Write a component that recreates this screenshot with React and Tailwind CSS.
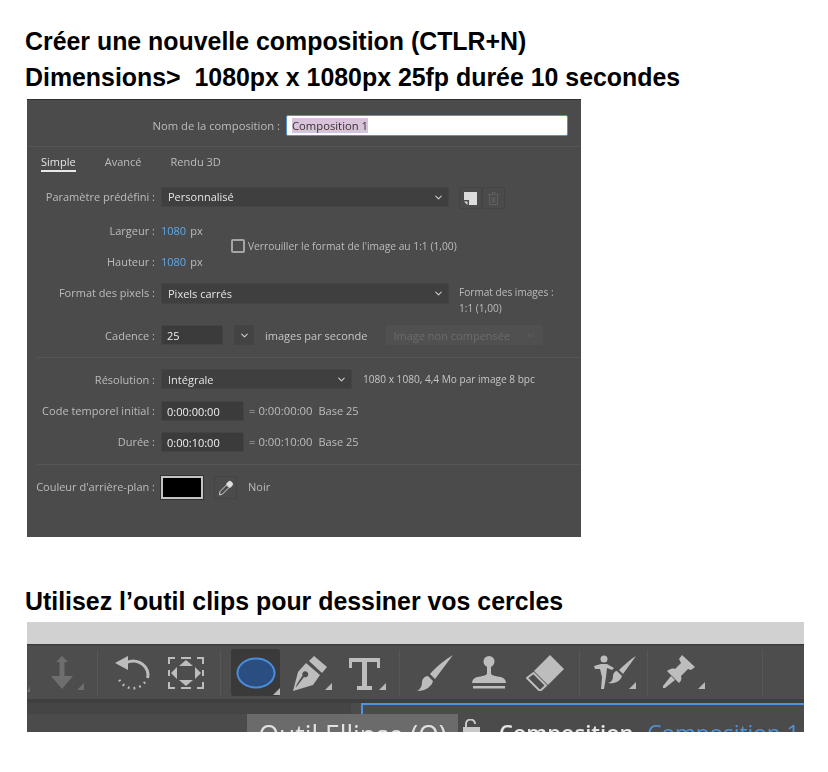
import { ChevronDown } from 'lucide-react';

const panelFont = { fontFamily: '"Open Sans", sans-serif' };

function Label({ children, width = 'w-[128px]', className = '' }) {
  return <div className={`${width} ${className} shrink-0 text-right text-[#bcbcbc] whitespace-nowrap`}>{children}</div>;
}

function Select({ children, width, height = 'h-[20px]', textClass = '-mt-[1px]' }) {
  return (
    <div className={`${width} ${height} ml-[6px] flex items-center justify-between rounded-[2px] border border-[#444444] bg-[#3f3f3f] pl-[6px] pr-[4px] font-medium text-[#e4e4e4]`}>
      <span className={textClass}>{children}</span>
      <ChevronDown size={11} strokeWidth={2.25} className="text-[#d0d0d0]" />
    </div>
  );
}

function Field({ children, width }) {
  return (
    <div className={`${width} ml-[6px] flex h-[20px] items-center rounded-[2px] border border-[#444444] bg-[#3b3b3b] pl-[5px] text-[#f0f0f0]`}>
      {children}
    </div>
  );
}

function Corner() {
  return (
    <svg width="7" height="7" viewBox="0 0 7 7" className="absolute bottom-[1px] right-0">
      <path d="M7 0V7H0Z" fill="#b9b9b9" />
    </svg>
  );
}

function Sep({ left }) {
  return <div className={`${left} h-[46px] w-[1px] shrink-0 bg-[#575757]`} />;
}

function CompositionPanel() {
  return (
    <div style={panelFont} className="ml-[2px] flex h-[438px] w-[554px] flex-col border-t border-[#2f2f2f] bg-[#4b4b4b] text-[11px] leading-[15px] blur-[0.35px]">
      <div className="flex h-[47px] shrink-0 items-start border-b border-[#555555] pt-[15px]">
        <div className="flex items-center">
          <Label width="w-[253px]">
            <span className="text-[11.25px]">Nom de la composition :</span>
          </Label>
          <div className="ml-[6px] flex h-[21px] w-[282px] items-center rounded-[2px] border border-[#4f94d4] bg-white pl-[5px] text-[#333333]">
            <span className="bg-[#d9c3da] text-[11.25px]">Composition 1</span>
          </div>
        </div>
      </div>

      <div className="flex h-[40px] shrink-0 items-start pl-[14px] pt-[7px] text-[#bcbcbc]">
        <div className="border-b-2 border-[#e8e8e8] pb-[1px] text-[#e4e4e4]">Simple</div>
        <div className="ml-[29px]">Avancé</div>
        <div className="ml-[29px]">Rendu 3D</div>
      </div>

      <div className="flex h-[21px] shrink-0 items-start">
        <div className="flex h-[20px] items-center">
          <Label className="-mt-[2px]">Paramètre prédéfini :</Label>
        </div>
        <Select width="w-[288px]">Personnalisé</Select>
        <div className="ml-[10px] flex h-[22px] w-[23px] items-center justify-center rounded-[2px] border border-[#444444]">
          <svg width="13" height="13" viewBox="0 0 13 13">
            <path d="M0 0H13V13H5V8H0Z" fill="#dcdcdc" />
            <path d="M0 9.5H3.5V13Z" fill="#dcdcdc" />
          </svg>
        </div>
        <div className="flex h-[22px] w-[23px] items-center justify-center rounded-[2px] border border-[#444444]">
          <svg width="11" height="13" viewBox="0 0 11 13" fill="none" stroke="#5f5f5f" strokeWidth="1">
            <path d="M0 2.5H11M4 2.5V.5H7V2.5M1.5 2.5V12.5H9.5V2.5M4 5V10.5M5.5 5V10.5M7 5V10.5" />
          </svg>
        </div>
      </div>

      <div className="flex h-[75px] shrink-0 items-start pt-[15px]">
        <div className="flex w-[204px] shrink-0 flex-col gap-[16px]">
          <div className="flex">
            <Label>Largeur :</Label>
            <span className="ml-[6px] text-[#62a8e5]">1080</span>
            <span className="ml-[4px] text-[#bcbcbc]">px</span>
          </div>
          <div className="flex">
            <Label>Hauteur :</Label>
            <span className="ml-[6px] text-[#62a8e5]">1080</span>
            <span className="ml-[4px] text-[#bcbcbc]">px</span>
          </div>
        </div>
        <div className="flex h-[46px] items-center">
          <div className="h-[14px] w-[14px] rounded-[2px] border-2 border-[#a5a5a5]" />
          <span className="ml-[3px] whitespace-nowrap text-[10.25px] text-[#bcbcbc]">Verrouiller le format de l'image au 1:1 (1,00)</span>
        </div>
      </div>

      <div className="flex h-[42px] shrink-0 items-start">
        <div className="flex h-[20px] items-center">
          <Label className="-mt-[2px]">Format des pixels :</Label>
        </div>
        <Select width="w-[288px]" height="h-[21px]">Pixels carrés</Select>
        <div className="ml-[10px] pt-[1px] text-[10.1px] leading-[16px] text-[#bcbcbc]">
          <div>Format des images :</div>
          <div>1:1 (1,00)</div>
        </div>
      </div>

      <div className="flex h-[20px] shrink-0 items-center">
        <Label>Cadence :</Label>
        <Field width="w-[62px]">25</Field>
        <div className="ml-[11px] flex h-[20px] w-[20px] items-center justify-center rounded-[2px] border border-[#444444] bg-[#434343]">
          <ChevronDown size={11} strokeWidth={2.25} className="text-[#d0d0d0]" />
        </div>
        <span className="ml-[11px] text-[#c6c6c6]">images par seconde</span>
        <div className="ml-[19px] flex h-[20px] w-[157px] items-center justify-between rounded-[2px] bg-[#505050] pl-[7px] pr-[7px] text-[#6c6c6c]">
          <span>Image non compensée</span>
          <ChevronDown size={11} strokeWidth={2} className="text-[#636363]" />
        </div>
      </div>

      <div className="ml-[10px] mt-[12px] h-[1px] shrink-0 bg-[#565656]" />

      <div className="mt-[11px] flex h-[20px] shrink-0 items-center">
        <Label>Résolution :</Label>
        <Select width="w-[191px]" textClass="">Intégrale</Select>
        <span className="ml-[11px] whitespace-nowrap text-[10.1px] text-[#c6c6c6]">1080 x 1080, 4,4 Mo par image 8 bpc</span>
      </div>

      <div className="mt-[12px] flex h-[20px] shrink-0 items-center">
        <Label className="-mt-[2px]">Code temporel initial :</Label>
        <Field width="w-[83px]">0:00:00:00</Field>
        <span className="ml-[5px] -mt-[2px] text-[11.3px] text-[#bcbcbc]">= 0:00:00:00</span>
        <span className="ml-[6px] -mt-[2px] text-[#bcbcbc]">Base 25</span>
      </div>

      <div className="mt-[11px] flex h-[20px] shrink-0 items-center">
        <Label className="-mt-[2px]">Durée :</Label>
        <Field width="w-[83px]">0:00:10:00</Field>
        <span className="ml-[5px] -mt-[2px] text-[11.3px] text-[#bcbcbc]">= 0:00:10:00</span>
        <span className="ml-[6px] -mt-[2px] text-[#bcbcbc]">Base 25</span>
      </div>

      <div className="ml-[10px] mt-[12px] h-[1px] shrink-0 bg-[#565656]" />

      <div className="mt-[11px] flex h-[23px] shrink-0 items-center">
        <Label className="-mt-[2px]">Couleur d'arrière-plan :</Label>
        <div className="ml-[6px] h-[23px] w-[42px] border-2 border-[#c4c4c4] bg-black outline outline-[#333333]" />
        <div className="ml-[11px] flex h-[23px] w-[23px] items-center justify-center rounded-[2px] border border-[#444444]">
          <svg width="16" height="16" viewBox="0 0 16 16">
            <path d="M9.5 2.5L13.5 6.5L11.8 8L8 4.2Z" fill="#e0e0e0" />
            <path d="M10.5 1.5a1.9 1.9 0 0 1 2.7 0l1.3 1.3a1.9 1.9 0 0 1 0 2.7L12.5 7.5L8.5 3.5Z" fill="#e0e0e0" />
            <path d="M8.5 5L11 7.5L4.5 14L1.5 15L2 11.5Z" fill="none" stroke="#d4d4d4" strokeWidth="1" />
          </svg>
        </div>
        <span className="ml-[11px] -mt-[2px] text-[#bcbcbc]">Noir</span>
      </div>
    </div>
  );
}

function Toolbar() {
  return (
    <div className="relative ml-[2px] h-[110px] w-[777px] overflow-hidden bg-[#4b4b4b] blur-[0.35px]">
      <div className="h-[22px] bg-[#d1d1d1]" />
      <div className="h-[1px] bg-[#3a3a3a]" />
      <div className="flex h-[54px] items-center border-t border-[#474747] bg-[#4d4d4d]">
        <svg width="3" height="6" viewBox="0 0 3 6" className="mt-[33px] shrink-0">
          <path d="M3 0V6H0Z" fill="#6e6e6e" />
        </svg>
        <svg width="24" height="34" viewBox="0 0 24 34" className="ml-[20px] shrink-0">
          <path d="M12 0L18 6H14.5V20H23L12 33L1 20H9.5V6H6Z" fill="#6e6e6e" />
        </svg>
        <div className="relative ml-[3px] h-[34px] w-[7px] shrink-0"><div className="absolute bottom-[0px] left-0"><svg width="7" height="7" viewBox="0 0 7 7"><path d="M7 0V7H0Z" fill="#6e6e6e" /></svg></div></div>
        <Sep left="ml-[13px]" />
        <svg width="36" height="36" viewBox="0 0 36 36" className="ml-[16px] shrink-0">
          <path d="M11 8.5A15 15 0 0 1 34 19A15 15 0 0 1 33.5 23" fill="none" stroke="#bdbdbd" strokeWidth="3" />
          <path d="M1 8L14 1V15Z" fill="#bdbdbd" />
          <path d="M31 27A15 15 0 0 1 5 24" fill="none" stroke="#bdbdbd" strokeWidth="2.4" strokeDasharray="1.8 4" />
        </svg>
        <svg width="36" height="32" viewBox="0 0 36 32" className="ml-[18px] shrink-0">
          <path d="M1 7V1H7M13 1H23M29 1H35V7M35 13V19M35 25V31H29M23 31H13M7 31H1V25M1 19V13" fill="none" stroke="#bdbdbd" strokeWidth="2" />
          <path d="M18 3L25 9H11ZM18 29L25 23H11ZM3 16L9 10V22ZM33 16L27 10V22Z" fill="#bdbdbd" />
        </svg>
        <Sep left="ml-[16px]" />
        <div className="relative ml-[10px] flex h-[47px] w-[49px] shrink-0 items-center justify-center rounded-[3px] bg-[#3a3a3a]">
          <svg width="40" height="32" viewBox="0 0 40 32">
            <ellipse cx="20" cy="16" rx="18.5" ry="14.5" fill="#2b4e80" stroke="#4a8ddc" strokeWidth="2" />
          </svg>
          <Corner />
        </div>
        <div className="relative ml-[13px] h-[36px] w-[39px] shrink-0">
          <svg width="34" height="36" viewBox="0 0 34 36">
            <path d="M21 1L34 12L29 18L16 6Z" fill="#bdbdbd" />
            <path d="M13 8L27 20L20 30L0 36L5 17ZM2.5 33L11 22A3 3 0 1 0 9.5 20.5L4 29Z" fill="#bdbdbd" fillRule="evenodd" />
          </svg>
          <Corner />
        </div>
        <div className="relative ml-[17px] h-[36px] w-[37px] shrink-0">
          <svg width="31" height="32" viewBox="0 0 31 32" className="mt-[3px]">
            <path d="M0 0H31V10H28V4H18V28H23V32H8V28H13V4H3V10H0Z" fill="#bdbdbd" />
          </svg>
          <Corner />
        </div>
        <Sep left="ml-[13px]" />
        <svg width="36" height="36" viewBox="0 0 36 36" className="ml-[17px] shrink-0">
          <path d="M36 0L18 24L13 19C20 11 29 4 36 0Z" fill="#bdbdbd" />
          <path d="M11 21L16 26C15 31 9 36 0 36C4 34 5 30 5 27C5 24 8 21 11 21Z" fill="#bdbdbd" />
        </svg>
        <svg width="36" height="34" viewBox="0 0 36 34" className="ml-[18px] shrink-0">
          <circle cx="18" cy="5.5" r="5.5" fill="#bdbdbd" />
          <path d="M16 10H20V17C20 20 25 20 30 21C33 22 35 24 35 27H1C1 24 3 22 6 21C11 20 16 20 16 17Z" fill="#bdbdbd" />
          <rect x="2" y="30" width="32" height="2.5" fill="#bdbdbd" />
        </svg>
        <svg width="38" height="36" viewBox="0 0 38 36" className="ml-[19px] shrink-0">
          <path d="M24 0L38 14L22 30L8 16Z" fill="#bdbdbd" />
          <path d="M7.5 18L20 30.5L14 36L1 23Z" fill="none" stroke="#bdbdbd" strokeWidth="2" />
        </svg>
        <Sep left="ml-[15px]" />
        <div className="relative ml-[13px] h-[35px] w-[43px] shrink-0">
          <svg width="43" height="35" viewBox="0 0 43 35">
            <circle cx="11" cy="4" r="3.5" fill="#bdbdbd" />
            <path d="M1 11L8 9H14L21 13L19 15L14 13L13 22L11 34H8L9 22L7 14L2 14Z" fill="#bdbdbd" />
            <path d="M43 1L30 19L26 15C32 9 38 4 43 1Z" fill="#bdbdbd" />
            <path d="M24 16L29 21C27 27 21 29 15 28C19 27 20 24 20 21C20 18 22 16 24 16Z" fill="#bdbdbd" />
          </svg>
          <Corner />
        </div>
        <Sep left="ml-[11px]" />
        <div className="relative ml-[15px] h-[35px] w-[42px] shrink-0">
          <svg width="32" height="33" viewBox="0 0 32 33">
            <path d="M19 0L32 12L28 15L25 14L18 21C19 24 18 26 16 28L4 16C7 14 9 13 12 14L18 8L16 4Z" fill="#bdbdbd" />
            <path d="M8 21L12 25L2 33H0V31Z" fill="#bdbdbd" />
          </svg>
          <Corner />
        </div>
        <Sep left="ml-[57px]" />
      </div>
      <div className="h-[4px] bg-[#3f3f3f]" />
      <div className="flex">
        <div className="h-[11px] w-[324px] bg-[#454545]" />
        <div className="ml-[10px] h-[2px] flex-1 bg-[#4d94dc]" />
      </div>
      <div className="absolute left-[334px] top-[82px] h-[12px] w-[2px] bg-[#4d94dc]" />

      {/* tooltip and the panel title are cut off by the bottom of the picture */}
      <div style={panelFont} className="absolute left-[220px] top-[92px] flex h-[30px] w-[211px] justify-center bg-[#6b6b6b] pt-[6px] text-[26.5px] leading-[30px] whitespace-nowrap text-[#e2e2e2]">
        Outil Ellipse (Q)
      </div>
      <svg width="17" height="16" viewBox="0 0 17 16" className="absolute left-[436px] top-[97px]">
        <path d="M3 8V5A4.5 4.5 0 0 1 12 5" fill="none" stroke="#c8c8c8" strokeWidth="2" />
        <rect x="0" y="8" width="17" height="8" fill="#c8c8c8" />
      </svg>
      <div style={panelFont} className="absolute left-[472px] top-[95px] whitespace-nowrap text-[22px] font-semibold leading-[30px] text-[#e6e6e6]">
        Composition <span className="ml-[8px] text-[22.5px] font-normal text-[#4d94dc]">Composition 1</span>
      </div>
    </div>
  );
}

export default function App() {
  return (
    <div className="min-h-[772px] bg-white pt-[23px] pl-[25px]">
      <h1 style={{ fontFamily: '"Liberation Sans", Arial, sans-serif' }} className="whitespace-pre text-[24.9px] font-bold leading-[36px] text-black">
        Créer une nouvelle composition (CTLR+N)
        {'\n'}
        Dimensions{'>'}  1080px x 1080px 25fp durée 10 secondes
      </h1>
      <div className="mt-[4px]">
        <CompositionPanel />
      </div>
      <h2 style={{ fontFamily: '"Liberation Sans", Arial, sans-serif' }} className="mt-[46px] text-[24.9px] font-bold leading-[36px] text-black">
        Utilisez l’outil clips pour dessiner vos cercles
      </h2>
      <div className="mt-[3px]">
        <Toolbar />
      </div>
    </div>
  );
}
